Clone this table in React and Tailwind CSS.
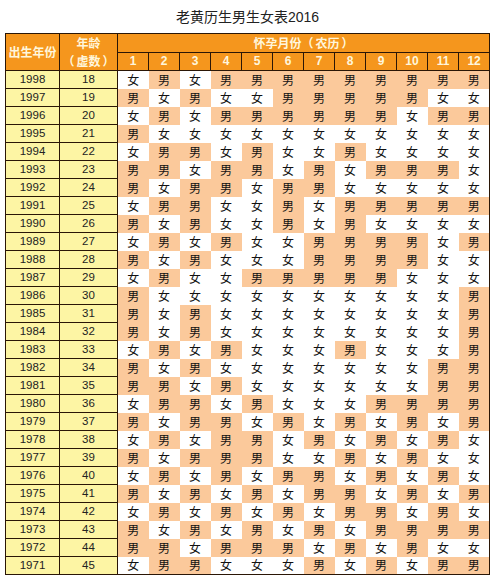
import React from "react";

const rows = [
  [1998, 18, "女男女男男男男男男男男男"],
  [1997, 19, "男女男女女男男男男男女女"],
  [1996, 20, "女男女男男男男男男女男男"],
  [1995, 21, "男女女女女女女女女女女女"],
  [1994, 22, "女男男女男女女男女女女女"],
  [1993, 23, "男男女男男女男女男男男女"],
  [1992, 24, "男女男男女男男女女女女女"],
  [1991, 25, "女男男女女男女男男男男男"],
  [1990, 26, "男女男女女男女男女女女女"],
  [1989, 27, "女男女男女女男男男男女男"],
  [1988, 28, "男女男女女女男男男男女女"],
  [1987, 29, "女男女女男男男男男女女女"],
  [1986, 30, "男女女女女女女女女女女男"],
  [1985, 31, "男女男女女女女女女女女男"],
  [1984, 32, "男女男女女女女女女女女男"],
  [1983, 33, "女男女男女女女男女女女男"],
  [1982, 34, "男女男女女女女女女女男男"],
  [1981, 35, "男男女男女女女女女女男男"],
  [1980, 36, "女男男女男女女女男男男男"],
  [1979, 37, "男女男男女男女男女男女男"],
  [1978, 38, "女男女男男女男女男女男女"],
  [1977, 39, "男女男男男女女男女男女女"],
  [1976, 40, "女男女男女男男女男女男女"],
  [1975, 41, "男女男女男女男男女男女男"],
  [1974, 42, "女男女男女男女男男女男女"],
  [1973, 43, "男女男女男女男女男男男男"],
  [1972, 44, "男男女男男男女男女男女女"],
  [1971, 45, "女男男女女女男女男女男男"],
];

const months = [1, 2, 3, 4, 5, 6, 7, 8, 9, 10, 11, 12];

export default function App() {
  return (
    <div className="w-[495px] h-[578px] bg-white overflow-hidden" style={{ fontFamily: '"Liberation Sans", "Noto Sans CJK SC", sans-serif' }}>
      <div className="h-[33px] flex items-center justify-center text-[14px] text-[#222] pt-[1px]">
        老黄历生男生女表2016
      </div>
      <table className="ml-[5px] border-collapse table-fixed w-[485px] border border-[#2a1606]">
        <colgroup>
          <col className="w-[54px]" />
          <col className="w-[58px]" />
          {months.map((m) => (
            <col key={m} className="w-[31px]" />
          ))}
        </colgroup>
        <thead>
          <tr className="h-[18px]">
            <th rowSpan={2} className="bg-[#f5961d] border border-[#2a1606] text-[#fff6dc] text-[12px] font-bold p-0 leading-none" style={{ fontFamily: '"Noto Sans CJK SC", sans-serif' }}>
              出生年份
            </th>
            <th rowSpan={2} className="bg-[#f5961d] border border-[#2a1606] text-[#fff6dc] text-[12px] font-bold p-0" style={{ fontFamily: '"Noto Sans CJK SC", sans-serif' }}>
              <div className="flex flex-col items-center leading-[18px]">
                <span>年龄</span>
                <span className="flex">
                  <span className="w-[12px] text-center">（</span>
                  <span className="px-[2px]">虚数</span>
                  <span className="w-[12px] text-center">）</span>
                </span>
              </div>
            </th>
            <th colSpan={12} className="bg-[#f5961d] border border-[#2a1606] text-[#fff6dc] text-[12px] font-bold p-0 leading-none" style={{ fontFamily: '"Noto Sans CJK SC", sans-serif' }}>
              <span className="inline-flex">
                <span>怀孕月份</span>
                <span className="w-[12px] text-center">（</span>
                <span className="px-[2px]">农历</span>
                <span className="w-[12px] text-center">）</span>
              </span>
            </th>
          </tr>
          <tr className="h-[18px]">
            {months.map((m) => (
              <th key={m} className="bg-[#f5961d] border border-[#2a1606] text-[#fff6dc] text-[12px] font-bold p-0 leading-none">
                {m}
              </th>
            ))}
          </tr>
        </thead>
        <tbody>
          {rows.map(([y, a, s]) => (
            <tr key={y} className="h-[18px]">
              <td className="bg-[#fdf5a4] border border-[#2a1606] text-center text-[11.5px] text-[#222] p-0 leading-none">{y}</td>
              <td className="bg-[#fdf5a4] border border-[#2a1606] text-center text-[11.5px] text-[#222] p-0 leading-none">{a}</td>
              {s.split("").map((c, i) => (
                <td
                  key={i}
                  className={
                    "text-center text-[12px] text-[#111] p-0 leading-none " +
                    (c === "男" ? "bg-[#fbc99b]" : "bg-white")
                  }
                  style={{ fontFamily: '"Noto Sans CJK SC", sans-serif' }}
                >
                  {c}
                </td>
              ))}
            </tr>
          ))}
        </tbody>
      </table>
    </div>
  );
}
